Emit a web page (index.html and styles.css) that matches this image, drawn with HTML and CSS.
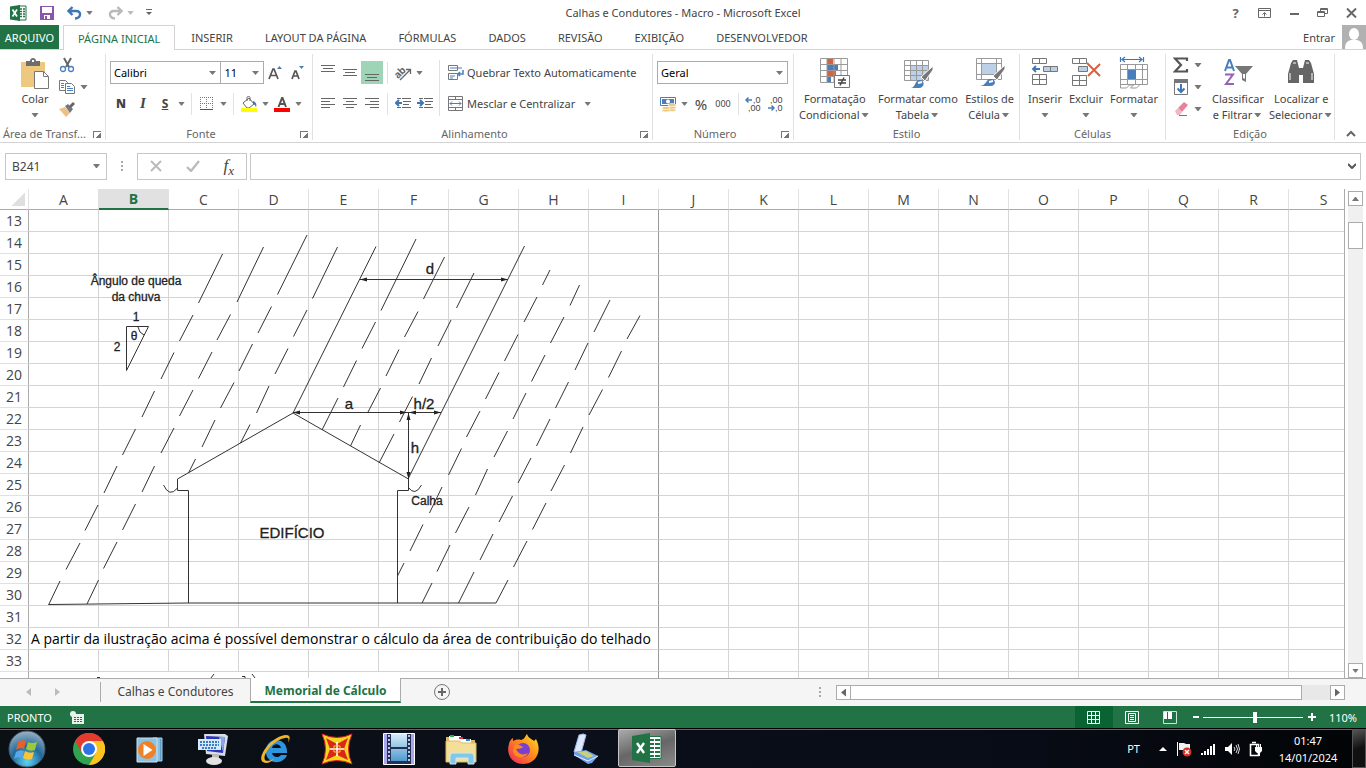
FILE: index.html
```html
<!DOCTYPE html>
<html lang="pt-BR">

<head>
    <meta charset="UTF-8">
    <meta name="viewport" content="width=device-width, initial-scale=1.0">
    <title>Calhas e Condutores - Macro - Microsoft Excel</title>
    <link rel="stylesheet" href="styles.css">
</head>

<body>
    <!-- Title bar -->
    <header class="titlebar">
        <div class="quick">
            <svg width="18" height="18" viewBox="0 0 18 18"><path d="M9 2h8v14H9z" fill="#fff" stroke="#217346"/><path d="M11 5h2m1 0h2M11 7.500h2m1 0h2M11 10h2m1 0h2M11 12.500h2m1 0h2" stroke="#217346" stroke-width="1.500"/><path d="M1 2.500L11 1v16L1 15.500z" fill="#217346"/><path d="M3.500 5.500l4.500 7M8 5.500l-4.500 7" stroke="#fff" stroke-width="1.700"/></svg>
            <button aria-label="Salvar"><svg width="14" height="14" viewBox="0 0 14 14"><path d="M0 0h14v14H0z" fill="#8a56ad"/><path d="M2 1h10v6H2zM4 9h6v4H4z" fill="#fff"/><path d="M5 10h2v4H5z" fill="#8a56ad"/></svg></button>
            <button aria-label="Desfazer"><svg width="15" height="14" viewBox="0 0 15 14"><path d="M1.500 5h7.500c6 0 5 7-1 7.500M5.500 1L1.500 5l4 4" fill="none" stroke="#3e75b4" stroke-width="2.400"/></svg></button>
            <i class="caret"></i>
            <button aria-label="Refazer"><svg width="15" height="14" viewBox="0 0 15 14"><path d="M13.500 5H6C0 5 1 12 7 12.500M9.500 1l4 4-4 4" fill="none" stroke="#b9b9b9" stroke-width="2.400"/></svg></button>
            <i class="caret faded"></i>
            <button aria-label="Personalizar"><svg width="8" height="8" viewBox="0 0 8 8"><path d="M1 .5h6" stroke="#666"/><path d="M1 3h6L4 6z" fill="#666"/></svg></button>
        </div>
        <h1>Calhas e Condutores - Macro - Microsoft Excel</h1>
        <div class="window-buttons">
            <button aria-label="Ajuda" class="help">?</button>
            <button aria-label="Opções da faixa"><svg width="13" height="10" viewBox="0 0 13 10"><path d="M.5.500h12v9H.5zM.5 2.500h12M6.500 8.500V5M4.500 6.500l2-2 2 2" fill="none" stroke="#666"/></svg></button>
            <button aria-label="Minimizar"><svg width="10" height="10" viewBox="0 0 10 10"><path d="M1 5h9v2H1z" fill="#666"/></svg></button>
            <button aria-label="Restaurar"><svg width="11" height="10" viewBox="0 0 11 10"><path d="M3.500 3V.5h7v5H8M.5 3.500h7v5h-7zM3 1.500h7M0 4.500h8" fill="none" stroke="#666"/></svg></button>
            <button aria-label="Fechar"><svg width="11" height="10" viewBox="0 0 11 10"><path d="M1 .5l9 9M10 .5l-9 9" stroke="#666" stroke-width="2"/></svg></button>
        </div>
    </header>

    <!-- Ribbon tabs -->
    <nav class="tabs">
        <button class="file">ARQUIVO</button>
        <button class="active">PÁGINA INICIAL</button>
        <button>INSERIR</button>
        <button>LAYOUT DA PÁGINA</button>
        <button>FÓRMULAS</button>
        <button>DADOS</button>
        <button>REVISÃO</button>
        <button>EXIBIÇÃO</button>
        <button>DESENVOLVEDOR</button>
        <a href="#" class="signin">Entrar
            <svg width="24" height="24" viewBox="0 0 24 24"><path d="M0 0h24v24H0z" fill="#b1b1b1"/><ellipse cx="12" cy="9" rx="5" ry="6" fill="#fff"/><path d="M3 24c0-6 2-8 6-9h6c4 1 6 3 6 9z" fill="#fff"/></svg>
        </a>
    </nav>

    <!-- Ribbon -->
    <section class="ribbon">
        <div class="group clipboard">
            <div class="body">
                <button class="big"><svg width="30" height="34" viewBox="0 0 30 34"><path d="M1 6h24v25H1z" fill="#edc87e"/><path d="M6 5h4c0-4 6-4 6 0h4v5H6z" fill="#6d6d6d"/><path d="M12 4h2v2h-2z" fill="#fff"/><path d="M14.500 15.500h9l5 5v12h-14z" fill="#fff" stroke="#777"/><path d="M23.500 15.500v5h5" fill="none" stroke="#777"/></svg>Colar<i class="caret"></i></button>
                <div class="stack">
                    <button aria-label="Recortar"><svg width="16" height="16" viewBox="0 0 16 16"><path d="M5 1l5 9M12 1l-5 9" stroke="#666" stroke-width="2"/><circle cx="4" cy="12" r="2.500" fill="none" stroke="#4a7ebb" stroke-width="1.300"/><circle cx="12" cy="12" r="2.500" fill="none" stroke="#4a7ebb" stroke-width="1.300"/></svg></button>
                    <button aria-label="Copiar"><svg width="16" height="16" viewBox="0 0 16 16"><path d="M.5 1.500h6l2 2v8h-8z" fill="#fff" stroke="#777"/><path d="M6.500 4.500h6l3 3v7h-9z" fill="#fff" stroke="#777"/><path d="M2 4.500h3M2 6.500h3M2 8.500h3M8 7.500h3M8 9.500h6M8 11.500h6" stroke="#4a7ebb"/></svg></button><i class="caret"></i>
                    <button aria-label="Pincel"><svg width="16" height="16" viewBox="0 0 16 16"><path d="M0 8l6-2 5 6-4 4z" fill="#edc08a"/><path d="M6 5l3-2 5 5-3 4z" fill="#777"/><path d="M11 6l4-4" stroke="#666" stroke-width="3"/></svg></button>
                </div>
            </div>
            <div class="label with-launcher">Área de Transf...<i class="launcher"></i></div>
        </div>

        <div class="group font">
            <div class="body rows">
                <div class="row">
                    <select aria-label="Fonte" class="font-name"><option>Calibri</option></select>
                    <select aria-label="Tamanho" class="font-size"><option>11</option></select>
                    <button aria-label="Aumentar fonte" class="tool"><svg width="16" height="16" viewBox="0 0 16 16"><path d="M2 14L6 4h1l4 10M3.500 10.500h6" fill="none" stroke="#555" stroke-width="1.700"/><path d="M10 4l2.500-3L15 4z" fill="#4a7ebb"/></svg></button>
                    <button aria-label="Diminuir fonte" class="tool"><svg width="16" height="16" viewBox="0 0 16 16"><path d="M3 14l3-8h1l3 8M4.500 11h4.500" fill="none" stroke="#555" stroke-width="1.700"/><path d="M10 1h5l-2.500 3z" fill="#4a7ebb"/></svg></button>
                </div>
                <div class="row">
                    <button class="tool letter"><b>N</b></button>
                    <button class="tool letter serif"><i>I</i></button>
                    <button class="tool letter"><u>S</u></button>
                    <i class="caret"></i>
                    <span class="sep"></span>
                    <button aria-label="Bordas" class="tool"><svg width="14" height="14" viewBox="0 0 14 14"><path d="M.5 0v12M6.500 0v12M12.500 0v12M0 .5h13M0 6.500h13" stroke="#777" stroke-dasharray="1 1"/><path d="M0 12.500h13" stroke="#555"/></svg></button>
                    <i class="caret"></i>
                    <span class="sep"></span>
                    <button aria-label="Cor de preenchimento" class="tool"><svg width="16" height="16" viewBox="0 0 16 16"><path d="M2 7l6-5 5 6-5 4H6z" fill="#fff" stroke="#666"/><path d="M6 5V1.500c0-1.500 3-1.500 3 0V5" fill="none" stroke="#666"/><path d="M12 5c3 1 4 3 3 6-1-2-2-3-3-3z" fill="#3e75b4"/><path d="M0 12h16v4H0z" fill="#ff0"/></svg></button>
                    <i class="caret"></i>
                    <button aria-label="Cor da fonte" class="tool"><svg width="16" height="16" viewBox="0 0 16 16"><path d="M4.500 11L8 2h.5L12 11M6 8h5" fill="none" stroke="#555" stroke-width="2"/><path d="M0 12h16v4H0z" fill="#f00"/></svg></button>
                    <i class="caret"></i>
                </div>
            </div>
            <div class="label with-launcher">Fonte<i class="launcher"></i></div>
        </div>

        <div class="group align">
            <div class="body">
                <div class="rows">
                    <div class="row">
                        <button aria-label="Em cima" class="tool"><svg width="14" height="16" viewBox="0 0 14 16"><path d="M0 .5h14M2 3.500h10M0 6.500h14" stroke="#666"/></svg></button>
                        <button aria-label="No meio" class="tool"><svg width="14" height="16" viewBox="0 0 14 16"><path d="M0 4.500h14M2 7.500h10M0 10.500h14" stroke="#666"/></svg></button>
                        <button aria-label="Embaixo" class="tool on"><svg width="14" height="16" viewBox="0 0 14 16"><path d="M0 9.500h14M2 12.500h10M0 15.500h14" stroke="#666"/></svg></button>
                        <span class="sep"></span>
                        <button aria-label="Orientação" class="tool"><svg class="orient" width="18" height="18" viewBox="0 0 18 18"><text x="0" y="12" class="rotated" transform="rotate(-45 6 9)">ab</text><path d="M6 16l10-10M12 5.500h4.500V10" fill="none" stroke="#666" stroke-width="1.300"/></svg></button>
                        <i class="caret"></i>
                    </div>
                    <div class="row">
                        <button aria-label="Esquerda" class="tool"><svg width="14" height="14" viewBox="0 0 14 14"><path d="M0 1.500h14M0 4.500h9M0 7.500h14M0 10.500h9" stroke="#666"/></svg></button>
                        <button aria-label="Centro" class="tool"><svg width="14" height="14" viewBox="0 0 14 14"><path d="M0 1.500h14M3 4.500h8M0 7.500h14M3 10.500h8" stroke="#666"/></svg></button>
                        <button aria-label="Direita" class="tool"><svg width="14" height="14" viewBox="0 0 14 14"><path d="M0 1.500h14M5 4.500h9M0 7.500h14M5 10.500h9" stroke="#666"/></svg></button>
                        <span class="sep"></span>
                        <button aria-label="Diminuir recuo" class="tool"><svg width="16" height="14" viewBox="0 0 16 14"><path d="M2 1.500h4m1 0h9M8 4.500h8M8 7.500h6M2 10.500h4m1 0h9" stroke="#666"/><path d="M1 6h6M4 3L1 6l3 3" fill="none" stroke="#3e75b4" stroke-width="2"/></svg></button>
                        <button aria-label="Aumentar recuo" class="tool"><svg width="16" height="14" viewBox="0 0 16 14"><path d="M2 1.500h4m1 0h9M8 4.500h8M8 7.500h6M2 10.500h4m1 0h9" stroke="#666"/><path d="M0 6h6M3 3l3 3-3 3" fill="none" stroke="#3e75b4" stroke-width="2"/></svg></button>
                    </div>
                </div>
                <span class="sep tall"></span>
                <div class="rows wide">
                    <div class="row">
                        <button class="text-tool"><svg width="16" height="16" viewBox="0 0 16 16"><path d="M.5.500h9v5h-9zM.5 8.500h9v6h-9z" fill="none" stroke="#777"/><path d="M2 3h12M2 11h5M2 13h3" stroke="#4a7ebb" stroke-width="1.200"/><path d="M15 5v4h-5M12 7l-2 2 2 2" fill="none" stroke="#4a7ebb" stroke-width="1.500"/></svg>Quebrar Texto Automaticamente</button>
                    </div>
                    <div class="row">
                        <button class="text-tool"><svg width="16" height="16" viewBox="0 0 16 16"><path d="M.5.500h14v14H.5zM.5 3.500h14M.5 11.500h14M7.500.500v3M7.500 11.500v3" fill="none" stroke="#777"/><path d="M2 7.500h11M4 5.500l-2 2 2 2M11 5.500l2 2-2 2" fill="none" stroke="#4a7ebb"/></svg>Mesclar e Centralizar</button>
                        <i class="caret"></i>
                    </div>
                </div>
            </div>
            <div class="label with-launcher">Alinhamento<i class="launcher"></i></div>
        </div>

        <div class="group number">
            <div class="body rows">
                <div class="row">
                    <select aria-label="Formato" class="format"><option>Geral</option></select>
                </div>
                <div class="row">
                    <button aria-label="Moeda" class="tool"><svg width="16" height="16" viewBox="0 0 16 16"><path d="M.5 1.500h15v8H.5z" fill="#fff" stroke="#4a7ebb"/><path d="M2 3h12v5H2z" fill="#4a7ebb"/><circle cx="8" cy="5.500" r="2" fill="#fff"/><g fill="#edc87e" stroke="#fff" stroke-width=".6"><ellipse cx="12" cy="14" rx="4" ry="1.600"/><ellipse cx="12" cy="11.500" rx="4" ry="1.600"/><ellipse cx="12" cy="9" rx="4" ry="1.600"/><ellipse cx="6" cy="14.300" rx="4" ry="1.600"/><ellipse cx="6" cy="12" rx="4" ry="1.600"/></g></svg></button>
                    <i class="caret"></i>
                    <button class="tool percent">%</button>
                    <button class="tool zeros">000</button>
                    <span class="sep"></span>
                    <button aria-label="Aumentar casas decimais" class="tool"><svg class="decimals" width="16" height="16" viewBox="0 0 16 16"><text x="7" y="7">,0</text><text x="2" y="15">,00</text><path d="M0 4h6M2.500 1.500L0 4l2.500 2.500" fill="none" stroke="#4a7ebb" stroke-width="1.500"/></svg></button>
                    <button aria-label="Diminuir casas decimais" class="tool"><svg class="decimals" width="16" height="16" viewBox="0 0 16 16"><text x="2" y="7">,00</text><text x="7" y="15">,0</text><path d="M0 12h6M3.500 9.500L6 12l-2.500 2.500" fill="none" stroke="#4a7ebb" stroke-width="1.500"/></svg></button>
                </div>
            </div>
            <div class="label with-launcher">Número<i class="launcher"></i></div>
        </div>

        <div class="group styles">
            <div class="body">
                <button class="big"><svg width="32" height="34" viewBox="0 0 32 34"><path d="M1.500 2.500h27v24h-27z" fill="#fff"/><path d="M8 3h6v5H8zM8 15h9v5H8z" fill="#d9603f"/><path d="M8 9h11v5H8zM8 21h4v5H8z" fill="#4a7ebb"/><path d="M1.500 2.500h27v24h-27zM8 2.500v24M15 2.500v24M22 2.500v24M1.500 8.500h27M1.500 14.500h27M1.500 20.500h27" fill="none" stroke="#999"/><path d="M15.500 19.500h15v12h-15z" fill="#fff" stroke="#777"/><path d="M19 24h8M19 27h8M25 21.500l-4 8" stroke="#444" stroke-width="1.400"/></svg>Formatação<span>Condicional<i class="caret"></i></span></button>
                <button class="big"><svg width="32" height="34" viewBox="0 0 32 34"><path d="M2.500 4.500h24v20h-24z" fill="#fff"/><path d="M9 10h17v14H9z" fill="#bcd1e8"/><path d="M2.500 4.500h24v20h-24zM8.500 4.500v20M14.500 4.500v20M20.500 4.500v20M2.500 9.500h24M2.500 14.500h24M2.500 19.500h24" fill="none" stroke="#999"/><path d="M31 10v4l-8 11-4-4z" fill="#777" stroke="#fff"/><path d="M9 32c5-1 4-9 9-8 5 0 5 8-1 8z" fill="#4a7ebb"/><path d="M16 27l4-1" stroke="#fff" stroke-width="2"/></svg>Formatar como<span>Tabela<i class="caret"></i></span></button>
                <button class="big"><svg width="32" height="34" viewBox="0 0 32 34"><path d="M2.500 2.500h25v21h-25z" fill="#fff"/><path d="M8 8h15v10H8z" fill="#bcd1e8"/><path d="M2.500 2.500h25v21h-25zM7.500 2.500v21M22.500 2.500v21M2.500 7.500h25M2.500 18.500h25" fill="none" stroke="#999"/><path d="M31 9v4l-8 11-4-4z" fill="#777" stroke="#fff"/><path d="M5 30c8 0 7-8 12-7 5 0 6 7-1 7z" fill="#4a7ebb"/><path d="M15 26l4-1" stroke="#fff" stroke-width="2"/></svg>Estilos de<span>Célula<i class="caret"></i></span></button>
            </div>
            <div class="label">Estilo</div>
        </div>

        <div class="group cells">
            <div class="body">
                <button class="big"><svg width="28" height="34" viewBox="0 0 28 34"><path d="M1.500 2.500h14v5h-14zM8.500 2.500v5M1.500 18.500h14v10h-14zM8.500 18.500v10M1.500 23.500h14" fill="none" stroke="#777"/><path d="M12.500 10.500h14v5h-14zM19.500 10.500v5" fill="#bcd1e8" stroke="#777"/><path d="M2 13h7M5 10l-3 3 3 3" fill="none" stroke="#3e75b4" stroke-width="1.800"/></svg>Inserir<i class="caret"></i></button>
                <button class="big"><svg width="30" height="34" viewBox="0 0 30 34"><path d="M1.500 2.500h14v5h-14zM8.500 2.500v5M1.500 19.500h14v10h-14zM8.500 19.500v10M1.500 24.500h14" fill="none" stroke="#777"/><path d="M7.500 10.500h9v5h-9z" fill="#bcd1e8" stroke="#777"/><path d="M16 7l13 13M29 8L17 20" stroke="#d9603f" stroke-width="2"/></svg>Excluir<i class="caret"></i></button>
                <button class="big"><svg width="30" height="34" viewBox="0 0 30 34"><path d="M1.500 1v5M24.500 1v5M3 3.500h20M6 1L3 3.500 6 6M20 1l3 2.500L20 6" fill="none" stroke="#3e75b4" stroke-width="1.200"/><path d="M1.500 8.500h27v20h-27zM8.500 8.500v20M16.500 8.500v20M23.500 8.500v20M1.500 13.500h27M1.500 23.500h27M1.500 28v4h6l3-3h4l-3 3h6l3-3" fill="none" stroke="#999"/><path d="M9 14h8v9H9z" fill="#4a7ebb"/></svg>Formatar<i class="caret"></i></button>
            </div>
            <div class="label">Células</div>
        </div>

        <div class="group edit">
            <div class="body">
                <div class="stack">
                    <button aria-label="Soma"><svg width="16" height="16" viewBox="0 0 16 16"><path d="M14 4V1.500H2l6 6.500-6 6.500h12V12" fill="none" stroke="#555" stroke-width="2.200"/></svg></button><i class="caret"></i>
                    <button aria-label="Preencher"><svg width="16" height="16" viewBox="0 0 16 16"><path d="M1.500.500h13v15h-13z" fill="#fff" stroke="#777"/><path d="M1 0h14v4H1z" fill="#777"/><path d="M8 5v8M4.500 9.500L8 13l3.500-3.500" fill="none" stroke="#3e75b4" stroke-width="2"/></svg></button><i class="caret"></i>
                    <button aria-label="Limpar"><svg width="16" height="16" viewBox="0 0 16 16"><path d="M5 7l6-6 4 3-6 7z" fill="#e8829a"/><path d="M2 10l3-3 4 4-2 3H4z" fill="#f2b5c2"/><path d="M6 14.500h8" stroke="#777"/></svg></button><i class="caret"></i>
                </div>
                <button class="big sort"><svg width="32" height="34" viewBox="0 0 32 34"><path d="M3 15L7 4h1l4 11M4 11.500h7" fill="none" stroke="#4a7ebb" stroke-width="2"/><path d="M3 18.500h8L4 28h8" fill="none" stroke="#9560b5" stroke-width="2"/><path d="M13 10h18l-7 8v8l-4-2v-6z" fill="#777"/><path d="M21 18h2v5l-2-1z" fill="#fff"/></svg>Classificar<span>e Filtrar<i class="caret"></i></span></button>
                <button class="big find"><svg width="28" height="34" viewBox="0 0 28 34"><path d="M6 4h4l2 8v15H1V18L4 7zM22 4h-4l-2 8v15h11V18L24 7zM12 12h4v7h-4z" fill="#666"/><path d="M6 7h3M19 7h3M3 17v7M25 17v7" stroke="#fff"/></svg>Localizar e<span>Selecionar<i class="caret"></i></span></button>
            </div>
            <div class="label">Edição</div>
        </div>
        <button class="collapse" aria-label="Recolher"><svg width="10" height="8" viewBox="0 0 10 8"><path d="M1 6l4-4 4 4" fill="none" stroke="#666" stroke-width="2"/></svg></button>
    </section>

    <!-- Formula bar -->
    <section class="formula">
        <div class="name-box"><input aria-label="Caixa de nome" value="B241"><i class="caret"></i></div>
        <span class="dots"></span>
        <div class="fx">
            <button aria-label="Cancelar"><svg width="12" height="12" viewBox="0 0 12 12"><path d="M1 1l10 10M11 1L1 11" stroke="#bbb" stroke-width="2"/></svg></button>
            <button aria-label="Inserir"><svg width="14" height="12" viewBox="0 0 14 12"><path d="M1 7l4 4 8-10" fill="none" stroke="#bbb" stroke-width="2.400"/></svg></button>
            <button class="fn">f<sub>x</sub></button>
        </div>
        <div class="formula-input"><input aria-label="Fórmula"><svg width="8" height="6" viewBox="0 0 8 6"><path d="M0 1l4 4 4-4" fill="none" stroke="#555" stroke-width="2"/></svg></div>
    </section>

    <!-- Worksheet -->
    <main class="sheet">
        <div class="grid">
            <table>
                <thead><tr id="columns"><th class="corner"></th></tr></thead>
                <tbody id="rows"></tbody>
            </table>
            <svg class="diagram" width="630" height="468" viewBox="29 210 630 468">
                <g class="rain">
                    <path d="M222.500 254l-24 49M193 315l-13.500 26M174 352.500l-13 26.500M154.500 391L142 417M135.500 429l-13 26M117 466l-13 27M98 505l-13 25.500M80 543l-14 26.500M60 581l-11.500 24"/>
                    <path d="M263.500 247L237 302M230.500 314.500L217 340M212 352l-13.500 26.500M193 390l-13.500 26M174 428l-13 25M154.500 466L142 492M135.500 504l-13 26M117 542l-13.500 26.500M98.500 580L87 604"/>
                    <path d="M307 235l-29.500 59.500M271.500 306.500L258 333M252.500 344L239 371M234 382.500L220.500 408M215 420l-13 27M195.500 459l-7 14"/>
                    <path d="M337.500 247l-25 51.500M307 310l-13.500 26.500M288 348.500L275 374M269 386l-12.500 27M250 424.500L240.500 443"/>
                    <path d="M376 246.500L293 413"/>
                    <path d="M416 239l-35 71.500M375.500 322L362 348.500M356.500 360.500l-13 26.500M338 398l-16 32"/>
                    <path d="M444.500 257l-21 42M418 311.500L404.500 337M399 349.500L386 376M380.500 388l-13 25M360.500 425l-10 21"/>
                    <path d="M474 273l-17.500 35M451 320l-13 26M431.500 358L419 384M412.500 396.500L399.500 422M394 434l-15 29"/>
                    <path d="M524.500 246L408 479"/>
                    <path d="M550 270l-7.500 15M537 297l-13 25M518 334.500L504.500 361M499 372.500L485.500 399M480 411l-13.500 26M461.500 448.500l-13 26.500M442 487l-12.500 26M423 524.500L410 551M404 563l-6.500 13"/>
                    <path d="M579.500 285L570 305.500M564 317l-13.500 26M545 355l-13.500 26.500M526 393l-13 26M507.500 431L494 457M487.500 469l-12 26M469 507l-13.500 26M450 545l-13 26.500M432 583l-10 20"/>
                    <path d="M610 300l-16 32M588 343l-13 27M568.500 382l-13 26M550 419l-13.500 27M531 458l-13 25M512.500 496L499 522M493 534l-13 26M474 572l-15.500 31"/>
                    <path d="M640 315.500L627 339M621.500 351l-13 26.500M602.500 389.500L589 415M583 427l-12.500 26M564.500 465L551 491M546 503l-13.500 26.500M527 541l-13.500 26M508 580l-12 23"/>
                </g>
                <g class="house">
                    <path d="M188.500 603V490.500h-11V479L293 413l115.500 66v11.500h-11V603"/>
                    <path d="M49 604.500l139-1.500h308"/>
                    <path d="M163.500 485q6 13 14 3M408 487q7 10 13.500-2"/>
                    <path d="M360 279.500h148M293 412.500h148M408.500 413v66"/>
                    <path d="M126.500 326.500h22l-22 44zM138 327q1 6 6 8"/>
                </g>
                <path class="tips" d="M360 279.500l7-2v4zM508 279.500l-7-2v4zM293 412.500l7-2v4zM407 412.500l-7-2v4zM409 412.500l7-2v4zM441 412.500l-7-2v4zM408.500 413l-2 7h4zM408.500 479l-2-7h4z"/>
                <g class="notes">
                    <text x="136" y="285">Ângulo de queda</text>
                    <text x="136" y="301">da chuva</text>
                    <text x="136" y="321">1</text>
                    <text x="117" y="351">2</text>
                    <text x="134" y="340">θ</text>
                    <text x="427" y="505">Calha</text>
                    <text x="292" y="538" class="dim">EDIFÍCIO</text>
                    <text x="430" y="274" class="dim">d</text>
                    <text x="349" y="409" class="dim">a</text>
                    <text x="424" y="409" class="dim">h/2</text>
                    <text x="415" y="453" class="dim">h</text>
                </g>
                <!-- top edge of the area formula, cut by the sheet tabs -->
                <path class="formula-top" d="M97 677.500h3M214 674l-3 4M242 676.500h3v2M252 674l3 4"/>
            </svg>
        </div>
        <div class="vscroll">
            <button aria-label="Para cima"><i class="caret up"></i></button>
            <div class="track"><div class="thumb"></div></div>
            <button aria-label="Para baixo"><i class="caret"></i></button>
        </div>
    </main>

    <!-- Sheet tabs -->
    <section class="sheet-tabs">
        <div class="arrows"><i class="arrow-left"></i><i class="arrow-right"></i></div>
        <button>Calhas e Condutores</button>
        <button class="active">Memorial de Cálculo</button>
        <button class="add" aria-label="Nova planilha"><svg width="16" height="16" viewBox="0 0 16 16"><circle cx="8" cy="8" r="7.500" fill="none" stroke="#777"/><path d="M8 4v8M4 8h8" stroke="#666" stroke-width="2"/></svg></button>
        <span class="dots"></span>
        <div class="hscroll">
            <button aria-label="Para a esquerda"><i class="arrow-left"></i></button>
            <div class="track"><div class="thumb"></div></div>
            <button aria-label="Para a direita"><i class="arrow-right"></i></button>
        </div>
    </section>

    <!-- Status bar -->
    <section class="status">
        <span>PRONTO</span>
        <svg class="macro" width="14" height="13" viewBox="0 0 14 13"><path d="M2 3h12v10H2z" fill="#e6f2ea"/><path d="M4 6.500h8M4 8.500h8M4 10.500h8" stroke="#217346" stroke-dasharray="2 1"/><circle cx="3" cy="3" r="3" fill="#e6f2ea"/></svg>
        <div class="views">
            <button class="on" aria-label="Normal"><svg width="13" height="13" viewBox="0 0 13 13"><path d="M.5.500h12v12H.5zM4.500.500v12M8.500.500v12M.5 4.500h12M.5 8.500h12" fill="none" stroke="#fff"/></svg></button>
            <button aria-label="Layout da página"><svg width="14" height="13" viewBox="0 0 14 13"><path d="M.5.500h13v12H.5zM3.500 2.500h7v8h-7zM5 4.500h4M5 6.500h4M5 8.500h4" fill="none" stroke="#fff"/></svg></button>
            <button aria-label="Quebra de página"><svg width="14" height="13" viewBox="0 0 14 13"><path d="M.5.500h13v12H.5z" fill="none" stroke="#cfe3d6"/><path d="M1 1h3v7H1zM5 1h4v7H5z" fill="#fff"/></svg></button>
        </div>
        <span class="minus"></span>
        <input type="range" aria-label="Zoom" min="10" max="210" value="114">
        <svg width="8" height="8" viewBox="0 0 8 8"><path d="M4 0v8M0 4h8" stroke="#fff" stroke-width="2"/></svg>
        <span class="zoom">110%</span>
    </section>

    <!-- Windows taskbar -->
    <footer class="taskbar">
        <button class="start" aria-label="Iniciar"><svg width="38" height="38" viewBox="0 0 38 38"><defs><radialGradient id="orb" cx=".5" cy=".85" r=".85"><stop offset="0" stop-color="#5fd4f5"/><stop offset=".5" stop-color="#21689b"/><stop offset="1" stop-color="#9db3c4"/></radialGradient></defs><circle cx="19" cy="19" r="18" fill="url(#orb)" stroke="#456"/><path d="M10 12q4-3 8-1l-2 8q-4-2-8 1z" fill="#e5622a"/><path d="M20 12q4 2 9 0l-2 8q-5 2-9-1z" fill="#9cc83c"/><path d="M8 22q4-3 8-1l-2 7q-4-2-8 1z" fill="#56a8e8"/><path d="M17 21q4 3 9 1l-2 7q-4 2-9-1z" fill="#fbc531"/></svg></button>
        <button aria-label="Chrome"><svg width="32" height="32" viewBox="0 0 32 32"><circle cx="16" cy="16" r="16" fill="#31a350"/><path d="M2.100 8A16 16 0 0 1 29.900 8H16z" fill="#e33b2e"/><path d="M2.100 8L9 20l7-12z" fill="#e33b2e"/><path d="M29.900 8A16 16 0 0 1 16 32l7-12-7-12z" fill="#fcc31e"/><circle cx="16" cy="16" r="8" fill="#fff"/><circle cx="16" cy="16" r="6" fill="#2a74e8"/></svg></button>
        <button aria-label="Media Player"><svg width="32" height="32" viewBox="0 0 32 32"><path d="M18 5h9v23h-9z" fill="#5e9fc8" stroke="#a7d2ea"/><path d="M22 5h3v23h-3z" fill="#8cc0e0"/><path d="M2 5h20v24H2z" fill="#8fc1e0" stroke="#c9e4f3"/><circle cx="12" cy="17" r="9" fill="#f08127"/><path d="M8.500 11v12l9-6z" fill="#fff"/></svg></button>
        <button aria-label="Teclado virtual"><svg width="32" height="32" viewBox="0 0 32 32"><path d="M7 1h21l3 2-3 20-19-2z" fill="#dadde3"/><path d="M9 3l19 1-2 16-16-2z" fill="#2a35b8"/><path d="M22 4h6l-2 15z" fill="#8ca4ea"/><path d="M15 21h7v5h-7z" fill="#bbb"/><ellipse cx="17" cy="28" rx="8" ry="4" fill="#e2e2e2"/><path d="M1 6h23v11H1z" fill="#d7eafa"/><path d="M3 9h19M3 12h19M5 15h14" stroke="#3a7dca" stroke-width="2" stroke-dasharray="2 1"/></svg></button>
        <button aria-label="Internet Explorer"><svg width="34" height="32" viewBox="0 0 34 32"><path d="M29 20H14c1 5 7 5 9 2h6c-4 11-22 9-21-4C8 3 30 3 29 20zM14 15h9c-1-5-8-5-9 0z" fill="#2f95dd"/><path d="M5 29C-2 25 13 3 28 2c5 0 4 4 2 8 1-4 1-6-3-5C15 7 4 22 7 27c2 2 6 0 9-1-4 4-8 5-11 3z" fill="#f0b62b"/></svg></button>
        <button aria-label="Estrela"><svg width="32" height="32" viewBox="0 0 32 32"><path d="M1 1q15 7 30 0-7 15 0 30-15-7-30 0Q8 16 1 1z" fill="#f5d51f" stroke="#d22"/><path d="M5 5l11 6 11-6-4 11 4 11-11-5-11 5 4-11z" fill="#d92818"/><path d="M16 9v14M9 16h14" stroke="#fff" stroke-width="1.500"/><path d="M13 13h6v6h-6z" fill="none" stroke="#f8cc3c"/></svg></button>
        <button aria-label="Movie Maker"><svg width="32" height="32" viewBox="0 0 32 32"><defs><linearGradient id="film" x2="0" y2="1"><stop offset="0" stop-color="#d7edfb"/><stop offset="1" stop-color="#4f9bce"/></linearGradient></defs><path d="M.5.500h31v31H.5z" fill="#a9a8ee" stroke="#fff"/><path d="M4 1h24v30H4z" fill="#263052"/><path d="M8 1h16v13H8zM8 16h16v12H8z" fill="url(#film)"/><path d="M6 2v28M26 2v28" stroke="#b8c6e8" stroke-width="2" stroke-dasharray="2 2"/></svg></button>
        <button aria-label="Explorer"><svg width="32" height="32" viewBox="0 0 32 32"><path d="M1 4h16v3h13v20H1z" fill="#d9b764"/><path d="M4 3h12v5H4zM14 6h12v5H14z" fill="#fff"/><path d="M5 2h4v2H5z" fill="#2ab13a"/><path d="M14 4h4v2h-4z" fill="#d33"/><path d="M21 6h4v2h-4z" fill="#38c"/><path d="M1 8h13l3 2h14v19H1z" fill="#f3df97" stroke="#dcbc63"/><path d="M5 31v-8q0-3 3-3h18q3 0 3 3v8h-6v-6H11v6z" fill="#83c8e6" stroke="#c9eaf6"/></svg></button>
        <button aria-label="Firefox"><svg width="32" height="32" viewBox="0 0 32 32"><defs><linearGradient id="fox" x1="1" y1="0" x2="0" y2="1"><stop offset="0" stop-color="#ffe226"/><stop offset=".45" stop-color="#ff8a1e"/><stop offset="1" stop-color="#f0225a"/></linearGradient></defs><path d="M20 1c1 4 5 5 7 7l2-2c7 13-1 25-13 25C4 31-1 20 2 11c0-2 2-5 4-6v3c2-1 5-2 8-1 4-1 4-4 6-6z" fill="url(#fox)"/><circle cx="16" cy="17" r="7" fill="#7a3fd0"/><path d="M8 12c4-2 6 2 9 2-3 1-5 2-8 2 2 5 7 7 12 4-4 7-15 5-15-3z" fill="#ff8a1e"/></svg></button>
        <button aria-label="Scanner"><svg width="32" height="32" viewBox="0 0 32 32"><path d="M10 2q5-2 7 0l-5 18-7-1z" fill="#dbe7fa" stroke="#9fb8e4"/><path d="M5 19l12-2 12 6-6 7-4 1L5 22z" fill="#6da2ea"/><path d="M8 19l9-1 8 5-6 2z" fill="#c9cf7c"/><path d="M5 22l14 6 10-5" fill="none" stroke="#e6f0ff"/></svg></button>
        <button aria-label="Excel" class="current"><svg width="32" height="32" viewBox="0 0 32 32"><path d="M17 4.500h13v22H17z" fill="#fff" stroke="#217346"/><path d="M18 8h5m1 0h5M18 12h5m1 0h5M18 16h5m1 0h5M18 20h5m1 0h5M18 24h5m1 0h5" stroke="#217346" stroke-width="2"/><path d="M1 4l18-3v30L1 28z" fill="#217346"/><path d="M6 11l7 10M13 11L6 21" stroke="#fff" stroke-width="2.400"/></svg></button>
        <div class="tray">
            <span class="lang">PT</span>
            <svg width="10" height="6" viewBox="0 0 10 6"><path d="M1 5h8L5 1z" fill="#fff"/></svg>
            <svg width="16" height="16" viewBox="0 0 16 16"><path d="M1.500 1v14" stroke="#fff"/><path d="M3 2h5l2 1h4v6H3z" fill="#f2f2f2"/><circle cx="11" cy="11" r="4.500" fill="#d92b20"/><path d="M9 9l4 4M13 9l-4 4" stroke="#fff" stroke-width="1.500"/></svg>
            <svg width="16" height="12" viewBox="0 0 16 12"><path d="M1 10h2v2H1zM4 8h2v4H4zM7 6h2v6H7zM10 3h2v9h-2zM13 1h2v11h-2z" fill="#fff"/></svg>
            <svg width="16" height="14" viewBox="0 0 16 14"><path d="M1 5h3l4-4v12L4 9H1z" fill="#fff"/><path d="M10 5q2 2 0 4M12 3q3 4 0 8M14 2q3 5 0 10" fill="none" stroke="#ddd"/></svg>
            <svg width="16" height="16" viewBox="0 0 16 16"><path d="M2.500 3.500h8v11h-8zM4 1.500h4" fill="none" stroke="#fff" stroke-width="1.600"/><path d="M7 6h7v4l-2 2H9L7 10zM8 3h1v3H8zM12 3h1v3h-1zM10 11h2v4h-2z" fill="#fff"/></svg>
            <time>01:47<br>14/01/2024</time>
            <span class="show-desktop"></span>
        </div>
    </footer>

    <script>
        const columns = document.getElementById('columns');
        const rows = document.getElementById('rows');
        const letters = 'ABCDEFGHIJKLMNOPQRS'.split('');

        // Cells that span several columns: row -> [[span, text], ...]
        const merged = {
            32: [[9, 'A partir da ilustração acima é possível demonstrar o cálculo da área de contribuição do telhado']],
            34: [[4, ''], [5, '']]
        };

        letters.forEach(letter => {
            columns.innerHTML += `<th class="${letter === 'B' ? 'selected' : ''}">${letter}</th>`;
        });

        for (let n = 13; n <= 34; n++) {
            let cells = '';
            let col = 0;

            (merged[n] || []).forEach(([span, text]) => {
                col += span;
                cells += `<td colspan="${span}" class="${col === 9 ? 'page-end' : ''}">${text}</td>`;
            });

            for (; col < letters.length; col++) {
                cells += `<td class="${letters[col] === 'I' ? 'page-end' : ''}"></td>`;
            }
            rows.innerHTML += `<tr><th>${n}</th>${cells}</tr>`;
        }
    </script>
</body>

</html>
```
FILE: styles.css
```css
/* General Styles */
* {
    box-sizing: border-box;
}

body {
    margin: 0;
    height: 100vh;
    display: flex;
    flex-direction: column;
    overflow: hidden;
    background: #fff;
    color: #444;
    font-family: "Noto Sans", "Open Sans", sans-serif;
    font-size: 11px;
}

button,
input,
select {
    font: inherit;
    color: inherit;
    border: none;
    background: none;
    padding: 0;
    margin: 0;
    border-radius: 0;
    outline: none;
}

svg {
    display: block;
    flex: none;
}

.caret {
    flex: none;
    width: 11px;
    height: 4px;
    background: #777;
    clip-path: polygon(2px 0, 9px 0, 6px 4px, 5px 4px);
}

.caret.faded {
    background: #bbb;
}

.caret.up {
    transform: rotate(180deg);
}

.arrow-left,
.arrow-right {
    width: 5px;
    height: 8px;
    background: #666;
    clip-path: polygon(0 50%, 100% 0, 100% 100%);
}

.arrow-right {
    clip-path: polygon(0 0, 100% 50%, 0 100%);
}

.dots {
    width: 2px;
    height: 10px;
    background: repeating-linear-gradient(#aaa 0 2px, transparent 2px 4px);
}

/* Title bar */
.titlebar {
    display: grid;
    grid-template-columns: 1fr auto 1fr;
    align-items: center;
    height: 25px;
}

.titlebar h1 {
    margin: 0;
    font-size: 11px;
    font-weight: normal;
}

.quick {
    display: flex;
    align-items: center;
    gap: 13px;
    padding-left: 9px;
}

.quick .caret {
    margin-left: -11px;
}

.quick .faded {
    margin-right: -4px;
}

.window-buttons {
    display: flex;
    justify-content: flex-end;
}

.window-buttons button {
    width: 29px;
    height: 24px;
    display: flex;
    align-items: center;
    justify-content: center;
}

.window-buttons .help {
    font-size: 13px;
    font-weight: bold;
    color: #666;
}

/* Ribbon tabs */
.tabs {
    display: flex;
    height: 25px;
    border-bottom: 1px solid #d4d4d4;
}

.tabs button {
    padding: 0 16px;
    white-space: nowrap;
}

.tabs .file {
    width: 59px;
    padding: 0;
    margin-right: 4px;
    background: #217346;
    color: #fff;
}

.tabs .active {
    height: 25px;
    padding: 0 14px;
    border: 1px solid #d4d4d4;
    border-bottom: none;
    background: #fff;
    color: #217346;
}

.signin {
    display: flex;
    align-items: center;
    gap: 7px;
    margin-left: auto;
    color: #444;
    text-decoration: none;
}

/* Ribbon */
.ribbon {
    display: flex;
    height: 93px;
    padding: 4px 0 2px;
    border-bottom: 1px solid #d4d4d4;
}

.group {
    flex: none;
    display: flex;
    flex-direction: column;
    border-right: 1px solid #e1e1e1;
}

.clipboard { width: 106px; }
.font { width: 207px; }
.align { width: 340px; }
.number { width: 141px; }
.styles { width: 226px; }
.cells { width: 146px; }
.edit { width: 169px; }

.body {
    flex: 1;
    display: flex;
}

.label {
    position: relative;
    line-height: 12px;
    text-align: center;
    color: #666;
}

.with-launcher {
    padding-right: 16px;
}

.launcher {
    position: absolute;
    right: 4px;
    top: 3px;
    width: 8px;
    height: 7px;
    border-left: 1px solid #777;
    border-top: 1px solid #777;
    background: linear-gradient(135deg, transparent 60%, #777 60%);
}

.rows {
    display: flex;
    flex-direction: column;
    gap: 8px;
    padding: 7px 4px 0;
}

.row {
    display: flex;
    align-items: center;
    height: 23px;
}

.sep {
    width: 1px;
    height: 22px;
    margin: 0 4px;
    background: #e1e1e1;
}

.sep.tall {
    height: 56px;
    margin: 6px 0 0;
}

.align .rows {
    padding-right: 3px;
}

.align .wide {
    padding-left: 8px;
}

.tool {
    width: 22px;
    height: 23px;
    display: flex;
    align-items: center;
    justify-content: center;
}

.tool.on {
    background: #9fd5b7;
}

.letter {
    font-size: 12px;
    font-weight: bold;
}

.serif {
    font-family: "Liberation Serif", serif;
    font-size: 15px;
}

.percent {
    font-size: 15px;
}

.zeros {
    font-size: 9px;
}

.orient {
    overflow: visible;
}

.rotated {
    font-size: 10px;
    font-weight: bold;
    fill: #666;
}

.decimals {
    overflow: visible;
    font-family: "Liberation Sans", Arial, sans-serif;
    font-size: 9px;
    fill: #444;
}

.text-tool {
    display: flex;
    align-items: center;
    gap: 3px;
    white-space: nowrap;
}

.text-tool + .caret {
    margin-left: 7px;
}

select {
    appearance: none;
    height: 23px;
    padding: 0 3px;
    border: 1px solid #ababab;
    color: #000;
    background: url("data:image/svg+xml,%3Csvg xmlns='http://www.w3.org/2000/svg' width='7' height='4'%3E%3Cpath d='M0 0h7L3.500 4z' fill='%23777'/%3E%3C/svg%3E") right 4px center no-repeat;
}

.font-name { width: 112px; }

.font-size {
    width: 44px;
    margin-left: -1px;
}

.format { width: 131px; }

.big {
    display: flex;
    flex-direction: column;
    align-items: center;
    padding-top: 2px;
    line-height: 16px;
    white-space: nowrap;
}

.big svg {
    margin-bottom: 1px;
}

.big > .caret {
    margin-top: 6px;
}

.big span {
    display: flex;
    align-items: center;
}

.clipboard .big {
    width: 58px;
    padding-left: 12px;
}

.stack {
    display: grid;
    grid-template-columns: 16px 18px;
    grid-template-rows: 22px 22px 22px;
    align-items: center;
    justify-items: center;
}

.clipboard .stack {
    margin-left: 1px;
}

.stack button {
    grid-column: 1;
}

.stack .caret {
    grid-column: 2;
}

.styles .body {
    padding: 0 5px;
    justify-content: space-between;
}

.cells .body {
    padding: 0 7px 0 8px;
    justify-content: space-between;
}

.edit .body {
    padding: 0 9px 0 7px;
    gap: 5px;
}

.edit .sort {
    margin-left: auto;
}

.collapse {
    margin: auto 10px 2px auto;
}

/* Formula bar */
.formula {
    display: flex;
    align-items: center;
    height: 46px;
    padding: 0 5px;
}

.name-box,
.fx,
.formula-input {
    display: flex;
    align-items: center;
    height: 27px;
    border: 1px solid #c6c6c6;
}

.name-box {
    width: 102px;
}

.name-box input {
    width: 85px;
    padding-left: 6px;
    font-size: 12px;
}

.formula .dots {
    margin: 0 14px;
}

.fx {
    width: 110px;
    margin-right: 3px;
    justify-content: space-around;
}

.fn {
    font-family: "Liberation Serif", serif;
    font-style: italic;
    font-size: 17px;
    line-height: 16px;
}

.fn sub {
    font-size: 13px;
    line-height: 0;
}

.formula-input {
    flex: 1;
    padding-right: 4px;
}

.formula-input input {
    flex: 1;
}

/* Worksheet */
.sheet {
    flex: 1;
    min-height: 0;
    display: flex;
}

.grid {
    position: relative;
    flex: 1;
    overflow: hidden;
    border-right: 1px solid #ababab;
}

table {
    width: 1359px;
    table-layout: fixed;
    border-collapse: separate;
    border-spacing: 0;
    font-family: "Open Sans", "Noto Sans", sans-serif;
}

th,
td {
    height: 22px;
    padding: 0;
    border-right: 1px solid #d4d4d4;
    border-bottom: 1px solid #d4d4d4;
    white-space: nowrap;
    line-height: 20px;
}

th {
    font-size: 14px;
    font-weight: normal;
    color: #444;
}

thead th {
    height: 21px;
    line-height: 19px;
    border-right-color: #e1e1e1;
    border-bottom-color: #ababab;
}

thead th.corner {
    width: 29px;
    background: linear-gradient(135deg, transparent 50%, #dfdfdf 50%) 12px 4px / 13px 13px no-repeat;
}

thead th.selected {
    background: #e1e1e1;
    border-bottom: 2px solid #217346;
    color: #217346;
    font-weight: bold;
}

tbody th {
    border-right-color: #ababab;
    border-bottom-color: #e1e1e1;
}

td {
    padding-left: 2px;
    font-size: 14px;
    color: #000;
}

td.page-end {
    border-right-color: #999;
}

.diagram {
    position: absolute;
    left: 29px;
    top: 21px;
}

.rain,
.house,
.formula-top {
    fill: none;
    stroke: #333;
}

.tips {
    fill: #222;
}

.notes {
    font-family: "Liberation Sans", Arial, sans-serif;
    font-size: 12px;
    fill: #222;
    stroke: #222;
    stroke-width: .3px;
    text-anchor: middle;
}

.notes .dim {
    font-size: 15px;
}

.vscroll {
    display: flex;
    flex-direction: column;
    width: 21px;
    padding: 2px 3px 0;
}

.vscroll button,
.hscroll button {
    width: 15px;
    height: 15px;
    display: flex;
    align-items: center;
    justify-content: center;
    border: 1px solid #ababab;
    background: #fff;
}

.vscroll .track {
    flex: 1;
    padding-top: 16px;
    background: #f0f0f0;
}

.vscroll .thumb {
    height: 27px;
    border: 1px solid #ababab;
    background: #fff;
}

/* Sheet tabs */
.sheet-tabs {
    display: flex;
    align-items: flex-start;
    height: 28px;
    padding-right: 21px;
    border-top: 1px solid #ababab;
    background: #f5f5f5;
}

.arrows {
    display: flex;
    gap: 24px;
    width: 101px;
    height: 20px;
    margin-top: 3px;
    padding: 6px 0 0 26px;
    border-right: 1px solid #ababab;
}

.arrows i {
    background: #bbb;
}

.sheet-tabs > button {
    height: 24px;
    width: 149px;
    font-size: 12px;
}

.sheet-tabs > .active {
    width: 151px;
    height: 25px;
    margin-top: -1px;
    padding-top: 2px;
    border: 1px solid #ababab;
    border-width: 0 1px;
    border-bottom: 2px solid #217346;
    background: #fff;
    color: #217346;
    font-weight: bold;
}

.sheet-tabs > .add {
    width: 16px;
    margin-left: 33px;
    padding-top: 2px;
}

.sheet-tabs .dots {
    margin: 8px 15px 0 auto;
}

.hscroll {
    display: flex;
    width: 509px;
    margin-top: 6px;
}

.hscroll .track {
    flex: 1;
    margin: 0 -1px;
    background: #e8e8e8;
}

.hscroll .thumb {
    width: 94%;
    height: 15px;
    border: 1px solid #ababab;
    background: #fff;
}

/* Status bar */
.status {
    display: flex;
    align-items: center;
    height: 22px;
    padding: 0 9px 0 7px;
    background: #217346;
    color: #fff;
}

.macro {
    margin-left: 18px;
}

.views {
    display: flex;
    margin: 0 4px 0 auto;
}

.views button {
    width: 38px;
    height: 22px;
    display: flex;
    align-items: center;
    justify-content: center;
}

.views .on {
    background: #0a6332;
}

.minus {
    width: 6px;
    height: 2px;
    background: #fff;
}

.status input {
    appearance: none;
    width: 100px;
    height: 12px;
    margin: 0 5px 0 4px;
    background: linear-gradient(#fff, #fff) center / 100% 1px no-repeat;
}

.status input::-webkit-slider-thumb {
    appearance: none;
    width: 4px;
    height: 11px;
    background: #fff;
}

.zoom {
    margin-left: 13px;
}

/* Windows taskbar */
.taskbar {
    display: flex;
    height: 40px;
    border-top: 1px solid #000;
    box-shadow: inset 0 1px #5b6b6b;
    background: linear-gradient(90deg, #0a1014, #0a0f1a 40%, #080c16 75%, #020405);
}

.taskbar button {
    width: 62px;
    display: flex;
    align-items: center;
    justify-content: center;
}

.taskbar .start {
    width: 58px;
    padding-right: 4px;
}

.taskbar .current {
    width: 58px;
    height: 38px;
    margin-left: 2px;
    border: 1px solid #c5c5c5;
    border-radius: 2px;
    background: linear-gradient(160deg, #aaa, #666 50%, #8a8a8a);
}

.tray {
    display: flex;
    align-items: center;
    gap: 8px;
    margin-left: auto;
    color: #fff;
}

.lang {
    margin-right: 10px;
}

.tray time {
    width: 72px;
    text-align: center;
    line-height: 17px;
}

.show-desktop {
    width: 14px;
    height: 39px;
    border: 1px solid #555;
    background: linear-gradient(160deg, #555, #111 50%);
}
```
